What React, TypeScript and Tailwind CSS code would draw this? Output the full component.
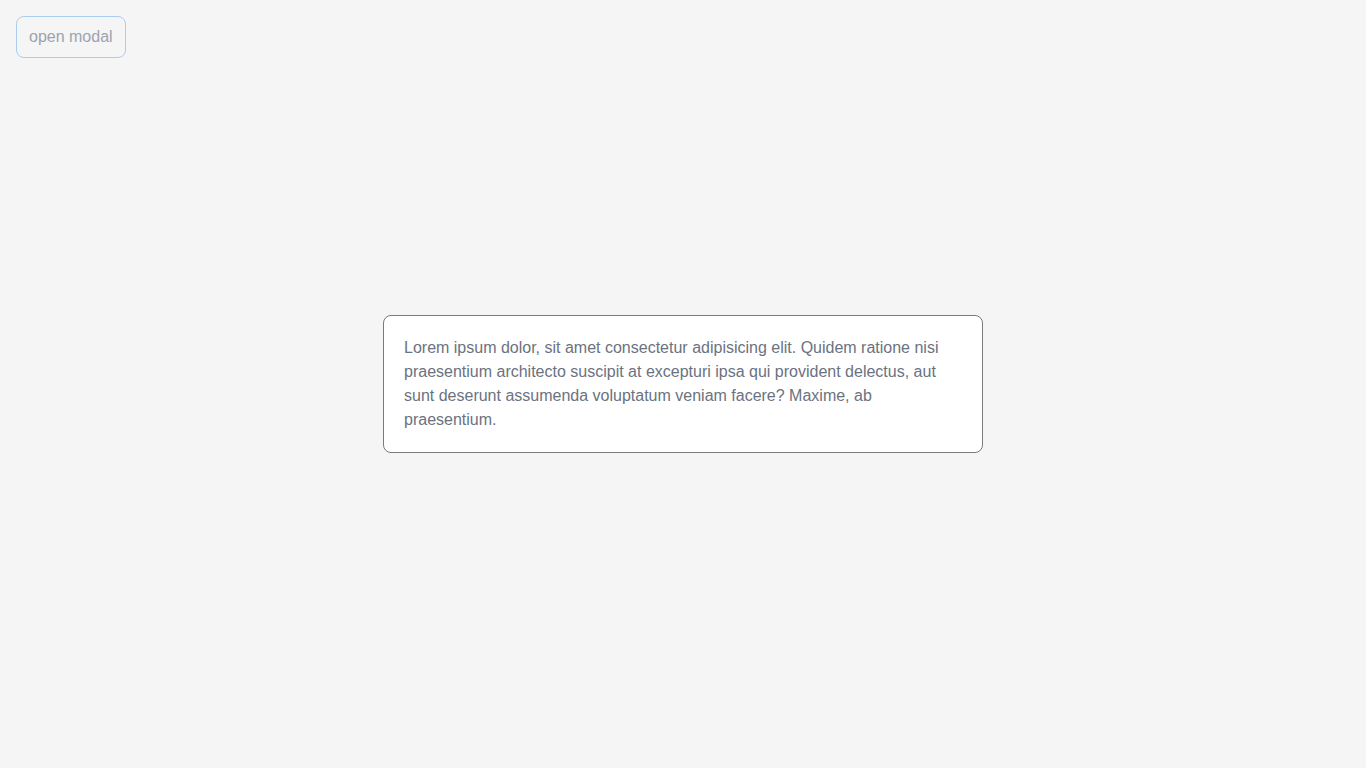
import React from 'react';

export default function App() {
  return (
    <div
      className="relative min-h-screen bg-[#f5f5f5] p-4"
      style={{ fontFamily: '"Liberation Sans", Arial, sans-serif' }}
    >
      <button className="rounded-lg border border-[#a9cdee] px-3 py-2 text-base leading-6 text-[#9ca3af]">
        open modal
      </button>

      <div className="absolute inset-0 flex items-center justify-center">
        <div className="w-[600px] rounded-lg border border-[#7a7a7a] bg-white p-5">
          <p className="text-base leading-6 text-[#6b7280]">
            Lorem ipsum dolor, sit amet consectetur adipisicing elit. Quidem ratione nisi
            praesentium architecto suscipit at excepturi ipsa qui provident delectus, aut
            sunt deserunt assumenda voluptatum veniam facere? Maxime, ab praesentium.
          </p>
        </div>
      </div>
    </div>
  );
}
